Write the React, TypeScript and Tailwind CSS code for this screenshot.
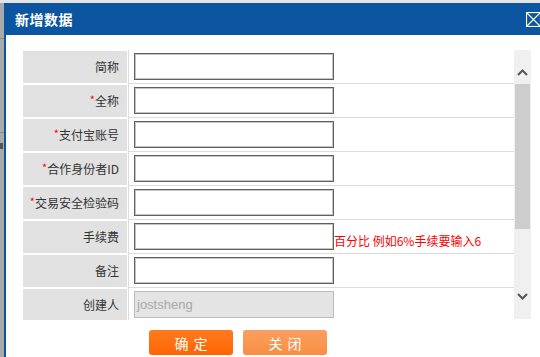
import React from "react";

const rows = [
  { label: "简称", required: false },
  { label: "全称", required: true },
  { label: "支付宝账号", required: true },
  { label: "合作身份者ID", required: true },
  { label: "交易安全检验码", required: true },
  { label: "手续费", required: false, hint: "百分比 例如6%手续要输入6" },
  { label: "备注", required: false },
  { label: "创建人", required: false, value: "jostsheng", disabled: true },
];

function CloseIcon() {
  return (
    <svg width="15" height="15" viewBox="0 0 15 15" className="block">
      <rect x="0.5" y="0.5" width="14" height="14" fill="none" stroke="#fff" strokeWidth="1.2" />
      <path d="M1 1 L14 14 M14 1 L1 14" stroke="#fff" strokeWidth="1.2" />
    </svg>
  );
}

function Chevron({ up }: { up?: boolean }) {
  return (
    <svg width="11" height="7" viewBox="0 0 11 7" className="block">
      <path
        d={up ? "M1 6 L5.5 1.5 L10 6" : "M1 1 L5.5 5.5 L10 1"}
        fill="none"
        stroke="#555"
        strokeWidth="2"
      />
    </svg>
  );
}

export default function App() {
  return (
    <div
      className="w-[540px] h-[357px] overflow-hidden bg-[#e4e4e4] flex"
      style={{ fontFamily: '"Liberation Sans", "Noto Sans CJK SC", sans-serif' }}
    >
      {/* page behind the dialog */}
      <div className="w-[4px] shrink-0 mt-[3px] bg-[#aaaaaa] flex flex-col">
        <div className="h-[35px]" />
        <div className="h-[1px] bg-[#888]" />
        <div className="h-[93px]" />
        <div className="h-[1px] bg-[#888]" />
        <div className="h-[10px]" />
        <div className="h-[6px] bg-[#555] w-[3px]" />
      </div>

      {/* dialog */}
      <div className="flex-1 mt-[3px] flex flex-col bg-white">
        <div className="h-[32px] bg-[#0c55a0] flex items-center justify-between pl-[11px] shrink-0">
          <span
            className="text-white text-[14px] font-bold tracking-[0.5px]"
            style={{ fontFamily: '"Noto Sans CJK SC", sans-serif' }}
          >
            新增数据
          </span>
          <div className="-mr-[1px] mt-[1px]">
            <CloseIcon />
          </div>
        </div>

        <div className="flex-1 border-l-2 border-[#0c55a0] flex flex-col">
          <div className="flex mt-[15px] pl-[17px] pr-[9px] h-[270px]">
            <div className="flex-1 overflow-hidden">
              {rows.map((r) => (
                <div key={r.label} className="flex h-[34px] items-start">
                  <div
                    className="w-[104px] h-[32px] mt-[1px] bg-[#e1e1e1] flex items-center justify-end pr-[8px] text-[12px] text-[#333]"
                    style={{ fontFamily: '"Noto Sans CJK SC", sans-serif' }}
                  >
                    {r.required && <span className="text-[#ff0000] text-[11px] self-center -mt-[3px]">*</span>}
                    {r.label}
                  </div>
                  <div className="ml-[1px] flex-1 h-[34px] border-l border-b border-[#dcdcdc] flex items-start pl-[5px] pt-[3px]">
                    <div
                      className={
                        r.disabled
                          ? "w-[200px] h-[27px] border border-[#bcbcbc] bg-[#e4e4e4] flex items-center pl-[2px] text-[13px] text-[#a8a8a8]"
                          : "w-[200px] h-[27px] border border-[#606060] shadow-[inset_0_0_0_1px_#c4c4c4] bg-white"
                      }
                    >
                      {r.value}
                    </div>
                    {r.hint && (
                      <span
                        className="text-[12px] text-[#ff0000] leading-none mt-[12px] whitespace-nowrap"
                        style={{ fontFamily: '"Noto Sans CJK SC", sans-serif' }}
                      >
                        {r.hint}
                      </span>
                    )}
                  </div>
                </div>
              ))}
            </div>

            {/* scrollbar */}
            <div className="w-[17px] bg-[#f0f0f0] flex flex-col items-center h-[269px]">
              <div className="h-[34px] flex items-center justify-center pt-[10px]">
                <Chevron up />
              </div>
              <div className="w-[15px] h-[145px] bg-[#cdcdcd]" />
              <div className="flex-1 flex items-end justify-center pb-[19px]">
                <Chevron />
              </div>
            </div>
          </div>

          <div
            className="flex gap-[10px] pl-[143px] mt-[10px]"
            style={{ fontFamily: '"Noto Sans CJK SC", sans-serif' }}
          >
            <button className="w-[84px] h-[25px] rounded-[3px] bg-gradient-to-b from-[#ff7a1c] to-[#ff6500] text-white text-[14px] tracking-[5px] pl-[5px] leading-none">
              确定
            </button>
            <button className="w-[84px] h-[25px] rounded-[3px] bg-gradient-to-b from-[#f9a05e] to-[#f88e44] text-white text-[14px] tracking-[5px] pl-[5px] leading-none">
              关闭
            </button>
          </div>
        </div>
      </div>
    </div>
  );
}
